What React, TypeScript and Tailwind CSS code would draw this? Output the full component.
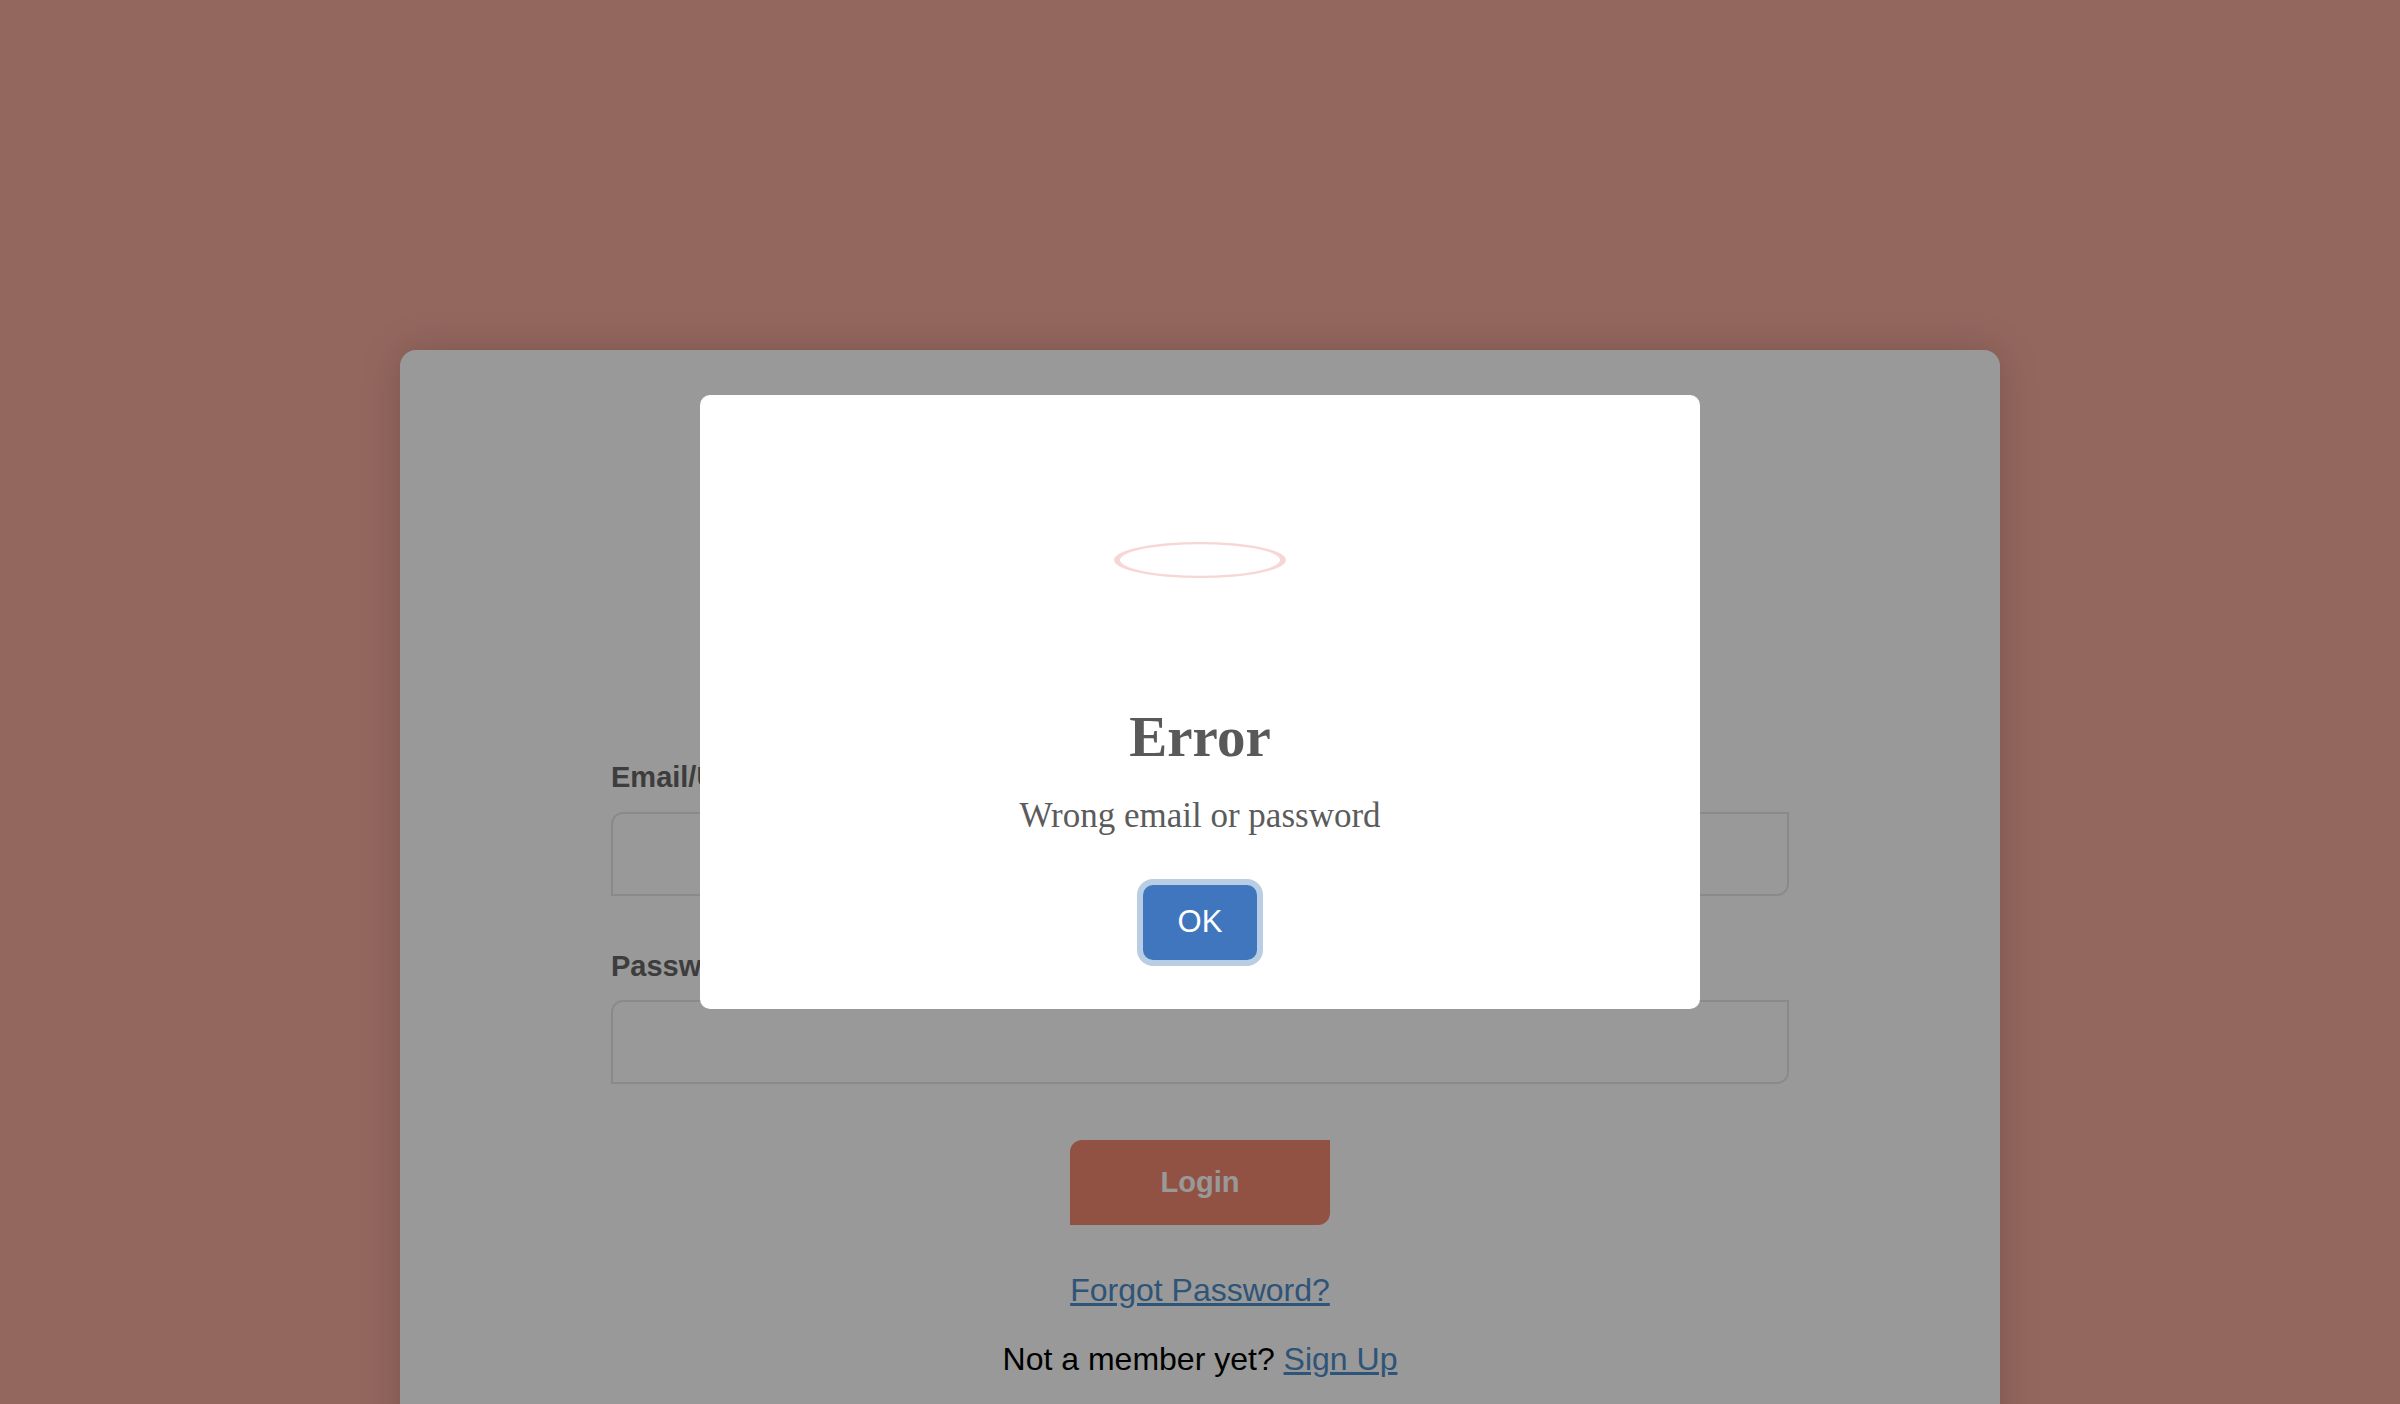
import React from 'react';

const ErrorIcon: React.FC = () => (
  <svg width="176" height="40" viewBox="0 0 176 40">
    <path
      fillRule="evenodd"
      fill="#f8d6d6"
      d="M2 20 A86 18 0 1 0 174 20 A86 18 0 1 0 2 20 Z M8 20 A80 15.8 0 1 0 168 20 A80 15.8 0 1 0 8 20 Z"
    />
  </svg>
);

const LoginCard: React.FC = () => {
  return (
    <div className="mx-auto w-[1600px] rounded-[16px] bg-white px-[211px] pt-[413px] pb-[200px] shadow-[0_0_40px_rgba(0,0,0,0.18)] font-['Liberation_Sans',Arial,sans-serif]">
      <label className="block text-[29px] leading-none font-bold text-[#666]">Email/Username</label>
      <input
        type="text"
        className="mt-[20px] block h-[84px] w-full rounded-tl-[12px] rounded-br-[12px] border-2 border-[#e6e6e6] bg-white outline-none"
      />
      <label className="mt-[56px] block text-[29px] leading-none font-bold text-[#666]">Password</label>
      <input
        type="password"
        className="mt-[19px] block h-[84px] w-full rounded-tl-[12px] rounded-br-[12px] border-2 border-[#e6e6e6] bg-white outline-none"
      />
      <div className="mt-[56px] flex justify-center">
        <button className="h-[85px] w-[260px] rounded-tl-[12px] rounded-br-[12px] bg-[#f38970] text-[29px] font-bold text-white">
          Login
        </button>
      </div>
      <div className="mt-[49px] text-center text-[32px] leading-none">
        <a href="#" className="text-[#4e8cc8] underline">Forgot Password?</a>
      </div>
      <div className="mt-[37px] text-center text-[32px] leading-none text-black">
        Not a member yet? <a href="#" className="text-[#4e8cc8] underline">Sign Up</a>
      </div>
    </div>
  );
};

const ErrorModal: React.FC = () => (
  <div className="fixed inset-0 flex items-center justify-center bg-black/40">
    <div className="flex w-[1000px] flex-col items-center rounded-[10px] bg-white pt-[79px] pb-[49px]">
      <div className="flex h-[172px] w-[176px] items-center justify-center">
        <ErrorIcon />
      </div>
      <h2 className="mt-[62px] font-['Liberation_Serif','Times_New_Roman',serif] text-[57px] leading-none font-bold text-[#595959]">
        Error
      </h2>
      <p className="mt-[33px] font-['Liberation_Serif','Times_New_Roman',serif] text-[35px] leading-none text-[#5b5b5b]">
        Wrong email or password
      </p>
      <button className="mt-[52px] h-[75px] w-[114px] rounded-[10px] bg-[#4076be] font-['Liberation_Sans',Arial,sans-serif] text-[31px] text-white ring-[6px] ring-[#b9cde5]">
        OK
      </button>
    </div>
  </div>
);

export default function App() {
  return (
    <div className="h-screen overflow-hidden bg-[#f7ac9d] pt-[350px]">
      <LoginCard />
      <ErrorModal />
    </div>
  );
}
